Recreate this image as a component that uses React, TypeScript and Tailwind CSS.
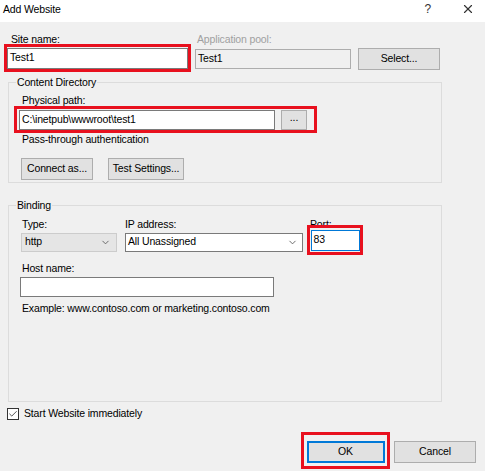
import { LuChevronDown, LuX, LuCheck } from "react-icons/lu";

const font = { fontFamily: '"Liberation Sans", Arial, sans-serif' };

function Btn({ label, w, focused }: { label: string; w: string; focused?: boolean }) {
  return (
    <button
      className={`${w} h-[22px] flex items-center justify-center bg-[#e1e1e1] text-black ${
        focused ? "border-2 border-[#0078d7]" : "border border-[#adadad]"
      }`}
    >
      {label}
    </button>
  );
}

function Group({ title, children, className }: { title: string; children: React.ReactNode; className?: string }) {
  return (
    <fieldset className={`border border-[#dcdcdc] ml-[8px] w-[434px] pl-[13px] ${className ?? ""}`}>
      <legend className="ml-[-6px] px-[1px] leading-[12px] text-black">{title}</legend>
      {children}
    </fieldset>
  );
}

export default function App() {
  return (
    <div
      className="w-[485px] h-[471px] bg-[#f0f0f0] overflow-hidden text-[10.5px] tracking-[-0.15px] text-black"
      style={font}
    >
      {/* title bar */}
      <div className="h-[22px] bg-white flex items-center pl-[3px] pr-[10px]">
        <span className="flex-1 mt-[-3px]">Add Website</span>
        <span className="text-[12px] text-[#333] mr-[30px] mt-[-4px]">?</span>
        <LuX className="text-[#333] w-[14px] h-[14px] mt-[-4px]" />
      </div>

      {/* site name / application pool */}
      <div className="flex mt-[11px] leading-[13px]">
        <span className="ml-[11px] w-[186px]">Site name:</span>
        <span className="text-[#a0a0a0]">Application pool:</span>
      </div>
      <div className="flex items-center mt-[-2px]">
        <div className="ml-[4px] w-[187px] h-[28px] border-[3px] border-[#e8101e] flex items-center">
          <div className="w-full h-[21px] border border-[#7a7a7a] bg-white flex items-center pl-[2px]">Test1</div>
        </div>
        <div className="ml-[4px] w-[156px] h-[20px] border border-[#adadad] bg-[#f0f0f0] flex items-center pl-[2px] mt-[1px]">
          Test1
        </div>
        <div className="ml-[7px] mt-[2px]">
          <Btn label="Select..." w="w-[82px]" />
        </div>
      </div>

      {/* content directory */}
      <Group title="Content Directory" className="mt-[4px] h-[107px]">
        <div className="leading-[13px] mt-[6px]">Physical path:</div>
        <div className="ml-[-8px] mt-[-1px] w-[303px] h-[27px] border-[3px] border-[#e8101e] flex items-center pl-[2px]">
          <div className="w-[256px] h-[20px] border border-[#7a7a7a] bg-white flex items-center pl-[2px]">
            C:\inetpub\wwwroot\test1
          </div>
          <div className="ml-[6px] w-[26px] h-[20px] border border-[#adadad] bg-[#e1e1e1] flex items-center justify-center leading-none pb-[4px]">
            ...
          </div>
        </div>
        <div className="leading-[13px]">Pass-through authentication</div>
        <div className="flex gap-[15px] mt-[12px] ml-[-1px]">
          <Btn label="Connect as..." w="w-[72px]" />
          <Btn label="Test Settings..." w="w-[76px]" />
        </div>
      </Group>

      {/* binding */}
      <Group title="Binding" className="mt-[16px] h-[203px]">
        <div className="flex leading-[13px] mt-[7px]">
          <span className="w-[103px]">Type:</span>
          <span className="w-[185px]">IP address:</span>
          <span>Port:</span>
        </div>
        <div className="flex items-center mt-[-6px] ml-[-1px]">
          <div className="w-[96px] h-[19px] border border-[#cccccc] bg-[#e5e5e5] flex items-center pl-[3px] mt-[4px]">
            <span className="flex-1">http</span>
            <LuChevronDown className="w-[11px] h-[11px] mr-[5px] text-[#606060]" />
          </div>
          <div className="ml-[8px] w-[178px] h-[19px] border border-[#7a7a7a] bg-white flex items-center pl-[2px] mt-[4px]">
            <span className="flex-1">All Unassigned</span>
            <LuChevronDown className="w-[11px] h-[11px] mr-[4px] text-[#606060]" />
          </div>
          <div className="ml-[4px] w-[56px] h-[30px] border-[3px] border-[#e8101e] flex items-center justify-center">
            <div className="w-[49px] h-[21px] border border-[#0078d7] bg-white flex items-center pl-[2px]">83</div>
          </div>
        </div>
        <div className="leading-[13px] mt-[7px]">Host name:</div>
        <div className="ml-[-2px] mt-[2px] w-[254px] h-[20px] border border-[#7a7a7a] bg-white" />
        <div className="leading-[13px] mt-[5px]">Example: www.contoso.com or marketing.contoso.com</div>
      </Group>

      {/* start immediately */}
      <div className="flex items-center mt-[4px] ml-[7px]">
        <div className="w-[12px] h-[12px] border border-[#333] bg-white flex items-center justify-center">
          <LuCheck className="w-[10px] h-[10px] text-[#333]" />
        </div>
        <span className="ml-[5px]">Start Website immediately</span>
      </div>

      {/* buttons */}
      <div className="flex items-center mt-[10px]">
        <div className="ml-[301px] w-[89px] h-[37px] border-[3px] border-[#e8101e] flex items-center justify-center pt-[3px]">
          <Btn label="OK" w="w-[78px]" focused />
        </div>
        <div className="ml-[4px] pt-[3px]">
          <Btn label="Cancel" w="w-[82px]" />
        </div>
      </div>
    </div>
  );
}
